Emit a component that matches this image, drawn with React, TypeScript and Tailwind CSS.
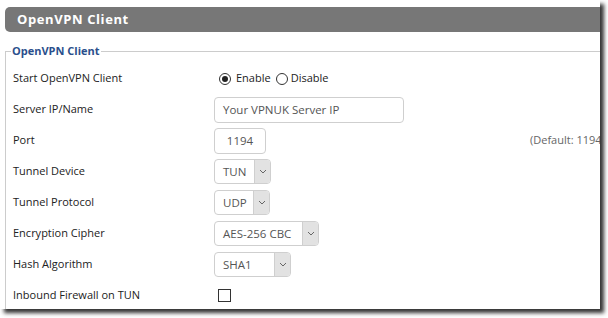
import React from "react";

function Chevron() {
  return (
    <svg width="8" height="5" viewBox="0 0 8 5" fill="none">
      <path d="M1 1 L4 4 L7 1" stroke="#666" strokeWidth="1" />
    </svg>
  );
}

function Select({ value, width }: { value: string; width: string }) {
  return (
    <div className={`flex h-[25px] ${width} border border-[#cfcfcf] rounded-[4px] overflow-hidden bg-white`}>
      <span className="flex-1 flex items-center pl-[8px] text-[#555] text-[11.5px]">{value}</span>
      <span className="w-[16px] flex items-center justify-center bg-[#e2e2e2] border-l border-[#cfcfcf]">
        <Chevron />
      </span>
    </div>
  );
}

function Radio({ checked }: { checked?: boolean }) {
  return (
    <span className="w-[12px] h-[12px] rounded-full border border-[#333] bg-white flex items-center justify-center">
      {checked && <span className="w-[6px] h-[6px] rounded-full bg-[#222]" />}
    </span>
  );
}

function Row({ label, children }: { label: string; children: React.ReactNode }) {
  return (
    <div className="flex items-center h-[31px]">
      <div className="w-[201px] shrink-0 text-[#222]">{label}</div>
      <div className="flex-1 flex items-center">{children}</div>
    </div>
  );
}

export default function App() {
  return (
    <div className="w-[608px] h-[318px] bg-white" style={{ fontFamily: '"Open Sans", "DejaVu Sans", sans-serif' }}>
      <div className="w-[600px] h-[309px] bg-white shadow-[4px_4px_4px_rgba(0,0,0,0.8)] overflow-hidden pt-[7px] pl-[5px] text-[11px]">
        <div className="h-[25px] bg-[#777777] rounded-l-[5px] flex items-center pl-[12px] text-white font-bold text-[13px] tracking-[0.6px]">
          OpenVPN Client
        </div>
        <fieldset className="mt-[11px] border-l border-t border-[#cccccc] pb-[10px]">
          <legend className="ml-[5px] px-[1px] text-[#2b4f8c] font-bold text-[11px] leading-[16px]">OpenVPN Client</legend>
          <div className="flex flex-col pt-[4px] pl-[7px]">
            <Row label="Start OpenVPN Client">
              <div className="flex items-center ml-[5px] text-[#222]">
                <Radio checked />
                <span className="ml-[5px]">Enable</span>
                <span className="ml-[5px]"><Radio /></span>
                <span className="ml-[3px]">Disable</span>
              </div>
            </Row>
            <Row label="Server IP/Name">
              <div className="w-[190px] h-[26px] border border-[#cfcfcf] rounded-[4px] flex items-center pl-[8px] text-[#555] text-[11.5px]">
                Your VPNUK Server IP
              </div>
            </Row>
            <Row label="Port">
              <div className="w-[316px] shrink-0">
                <div className="w-[52px] h-[26px] border border-[#cfcfcf] rounded-[4px] flex items-center justify-center text-[#555] text-[11.5px]">
                  1194
                </div>
              </div>
              <span className="whitespace-nowrap text-[#666]">(Default: 1194)</span>
            </Row>
            <Row label="Tunnel Device">
              <Select value="TUN" width="w-[57px]" />
            </Row>
            <Row label="Tunnel Protocol">
              <Select value="UDP" width="w-[56px]" />
            </Row>
            <Row label="Encryption Cipher">
              <Select value="AES-256 CBC" width="w-[105px]" />
            </Row>
            <Row label="Hash Algorithm">
              <Select value="SHA1" width="w-[77px]" />
            </Row>
            <Row label="Inbound Firewall on TUN">
              <span className="ml-[4px] w-[13px] h-[13px] border border-[#333] bg-white" />
            </Row>
          </div>
        </fieldset>
      </div>
    </div>
  );
}
